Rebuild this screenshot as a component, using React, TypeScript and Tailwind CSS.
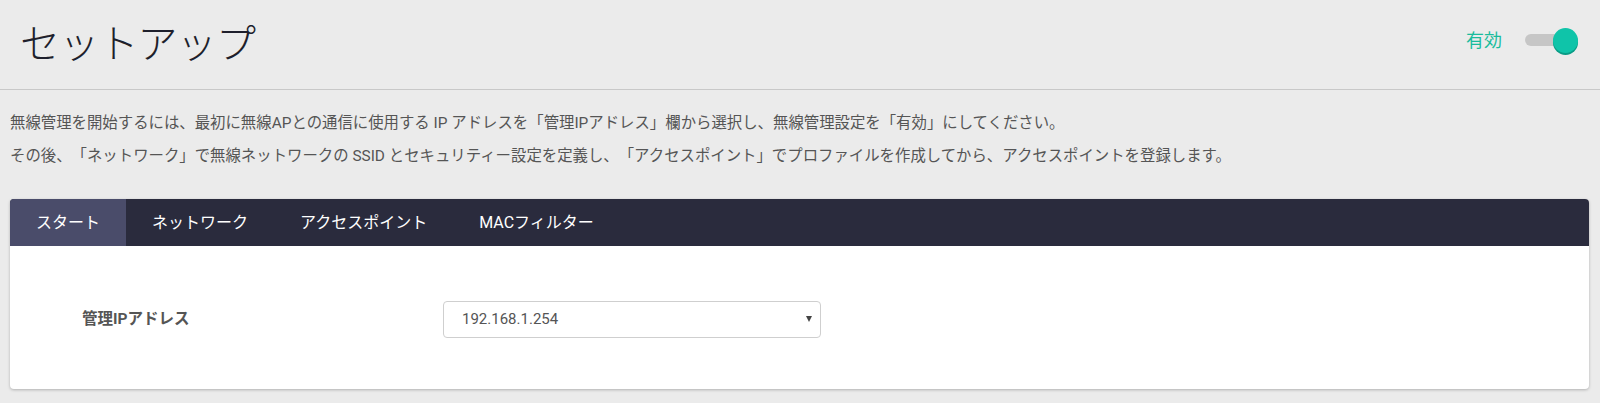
import { useState } from "react";

const TABS = ["スタート", "ネットワーク", "アクセスポイント", "MACフィルター"];

const FONT = "font-['Roboto','Noto_Sans_CJK_JP',sans-serif]";

export default function App() {
  const [active, setActive] = useState(0);
  const [enabled, setEnabled] = useState(true);

  return (
    <div className={`min-h-screen bg-[#ebebeb] ${FONT} text-[#555] [text-spacing-trim:space-all]`}>
      {/* Header */}
      <header className="flex h-[90px] items-center justify-between border-b border-[#c8c8c8] pl-[20px] pr-[22px]">
        <h1 className="text-[40px] font-light leading-none tracking-[-0.8px] text-[#1e1f2c]">
          セットアップ
        </h1>
        <div className="-mt-[9px] flex items-center gap-[23px]">
          <span className="text-[18px] text-[#1abc9c]">有効</span>
          <button
            onClick={() => setEnabled(!enabled)}
            className="relative flex h-[25px] w-[53px] items-center"
          >
            <span className="h-[12px] w-[40px] rounded-full bg-[#c6c6c6]" />
            <span
              className={`absolute top-0 h-[25px] w-[25px] rounded-full shadow-[0_2px_0_#0a9c86] ${
                enabled ? "right-0 bg-[#0fc4a9]" : "left-0 bg-[#f5f5f5]"
              }`}
            />
          </button>
        </div>
      </header>

      {/* Description */}
      <div className="px-[10px] pt-[17px] text-[15.4px] leading-[33px] text-[#555]">
        <p>
          無線管理を開始するには、最初に無線APとの通信に使用する IP アドレスを「管理IPアドレス」欄から選択し、無線管理設定を「有効」にしてください。
        </p>
        <p>
          その後、「ネットワーク」で無線ネットワークの SSID とセキュリティー設定を定義し、「アクセスポイント」でプロファイルを作成してから、アクセスポイントを登録します。
        </p>
      </div>

      {/* Card */}
      <div className="ml-[10px] mr-[11px] mt-[26px] overflow-hidden rounded-[4px] bg-white shadow-[0_1px_3px_rgba(0,0,0,0.25)]">
        <nav className="flex h-[47px] bg-[#2a2b3d]">
          {TABS.map((tab, i) => (
            <button
              key={tab}
              onClick={() => setActive(i)}
              className={`flex items-center px-[26px] text-[16px] text-white ${
                active === i ? "bg-[#4a4c6a]" : "bg-transparent"
              }`}
            >
              {tab}
            </button>
          ))}
        </nav>

        <div className="flex h-[143px] items-center pl-[72px] pt-[4px]">
          <label className="w-[361px] text-[15.5px] font-bold text-[#555]">管理IPアドレス</label>
          <div className="relative">
            <select className="h-[37px] w-[378px] appearance-none rounded-[4px] border border-[#cfcfcf] bg-white pl-[18px] text-[15px] text-[#555] outline-none">
              <option>192.168.1.254</option>
            </select>
            <span className="pointer-events-none absolute right-[9px] top-[15px] h-0 w-0 border-x-[3.5px] border-t-[6px] border-x-transparent border-t-[#444]" />
          </div>
        </div>
      </div>
    </div>
  );
}
